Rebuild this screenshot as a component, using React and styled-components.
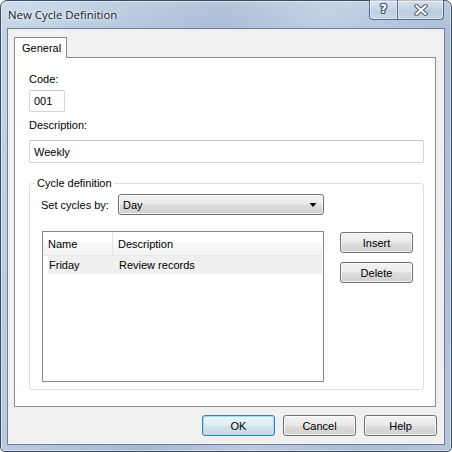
import React from 'react'
import styled, { createGlobalStyle, css } from 'styled-components'

const GlobalStyle = createGlobalStyle`
  html, body {
    margin: 0;
    padding: 0;
    background: #ffffff;
  }
  body {
    font-family: "Liberation Sans", Arial, sans-serif;
    font-size: 11px;
    color: #000000;
  }
  * {
    box-sizing: border-box;
  }
`

const Window = styled.div`
  width: 452px;
  height: 452px;
  display: flex;
  flex-direction: column;
  border: 1px solid #3f4d60;
  border-radius: 7px 7px 5px 5px;
  padding: 0 6px 6px 6px;
  background:
    linear-gradient(180deg, rgba(255,255,255,0.18), rgba(255,255,255,0) 40px),
    linear-gradient(100deg, #c4d4e8 0%, #b3c6de 22%, #a5b9d3 42%, #b9cbe1 62%, #a9bdd7 82%, #b2c5dd 100%);
  box-shadow: inset 0 0 0 1px rgba(255,255,255,0.45);
`

const TitleBar = styled.div`
  height: 27px;
  display: flex;
  align-items: flex-start;
  justify-content: space-between;
`

const Title = styled.div`
  font-family: "Open Sans", "Liberation Sans", sans-serif;
  font-size: 11.4px;
  line-height: 14px;
  padding: 7px 0 0 1px;
  color: #141a22;
  text-shadow: 0 0 6px rgba(255,255,255,0.9), 0 0 3px rgba(255,255,255,0.9);
`

const CaptionGroup = styled.div`
  display: flex;
  margin-top: -1px;
  margin-right: 1px;
`

const CaptionButton = styled.div`
  width: ${p => p.$w}px;
  height: 20px;
  display: flex;
  align-items: center;
  justify-content: center;
  border: 1px solid rgba(52, 70, 96, 0.75);
  border-top: none;
  background: linear-gradient(180deg, rgba(255,255,255,0.45) 0%, rgba(255,255,255,0.2) 50%, rgba(255,255,255,0.05) 51%, rgba(255,255,255,0.25) 100%);
  box-shadow: inset 0 0 0 1px rgba(255,255,255,0.35);
  ${p => p.$first && css`
    border-radius: 0 0 0 4px;
    border-right: none;
  `}
  ${p => p.$last && css`
    border-radius: 0 0 4px 0;
  `}
`

const HelpGlyph = styled.span`
  font-family: "DejaVu Sans", sans-serif;
  font-weight: bold;
  font-size: 12px;
  line-height: 12px;
  color: #ffffff;
  margin-top: -1px;
  text-shadow:
    1px 0 0 #4c5a6c, -1px 0 0 #4c5a6c, 0 1px 0 #4c5a6c, 0 -1px 0 #4c5a6c,
    1px 1px 0 #4c5a6c, -1px -1px 0 #4c5a6c, 1px -1px 0 #4c5a6c, -1px 1px 0 #4c5a6c;
`

const Client = styled.div`
  flex: 1;
  display: flex;
  flex-direction: column;
  border: 1px solid #6e7f97;
  background: #f0f0f0;
  padding: 8px 8px 0 6px;
`

const TabStrip = styled.div`
  display: flex;
  height: 20px;
  position: relative;
  z-index: 1;
`

const Tab = styled.div`
  width: 53px;
  height: 21px;
  border: 1px solid #898c95;
  border-bottom: none;
  background: #ffffff;
  padding: 3px 0 0 7px;
  line-height: 14px;
`

const Page = styled.div`
  flex: 1;
  display: flex;
  flex-direction: column;
  border: 1px solid #898c95;
  background: #ffffff;
  padding: 14px 11px 0 14px;
`

const FieldLabel = styled.div`
  line-height: 14px;
  margin-top: ${p => p.$mt || 0}px;
`

const TextBox = styled.div`
  height: ${p => p.$h}px;
  width: ${p => (p.$w ? `${p.$w}px` : 'auto')};
  margin-top: ${p => p.$mt}px;
  border: 1px solid #d2d5da;
  border-top-color: #c3c6cc;
  border-radius: 2px;
  padding: 0 0 0 4px;
  display: flex;
  align-items: center;
  line-height: 14px;
`

const Group = styled.fieldset`
  margin: 13px 0 0 0;
  padding: 4px 10px 7px 12px;
  border: 1px solid #d5dfe5;
  border-radius: 3px;
  min-width: 0;
`

const Legend = styled.legend`
  padding: 0 2px;
  margin-left: -7px;
  line-height: 14px;
`

const Row = styled.div`
  display: flex;
  align-items: center;
`

const RowLabel = styled.div`
  width: 77px;
  margin-left: -1px;
  line-height: 14px;
`

const buttonFace = css`
  border: 1px solid #707070;
  border-radius: 3px;
  background: linear-gradient(180deg, #f2f2f2 0%, #ebebeb 48%, #dddddd 52%, #cfcfcf 100%);
  box-shadow: inset 0 0 0 1px rgba(255,255,255,0.75);
`

const Combo = styled.div`
  ${buttonFace}
  width: 206px;
  height: 21px;
  display: flex;
  align-items: center;
  justify-content: space-between;
  padding: 0 3px 0 4px;
  line-height: 14px;
`

const ListArea = styled.div`
  display: flex;
  gap: 16px;
  margin-top: 16px;
`

const List = styled.div`
  width: 282px;
  height: 151px;
  border: 1px solid #828790;
  background: #ffffff;
  display: flex;
  flex-direction: column;
`

const HeaderRow = styled.div`
  display: flex;
  height: 24px;
  margin-right: 1px;
  border-bottom: 1px solid #e5e5e5;
  background: linear-gradient(180deg, #ffffff 0%, #ffffff 45%, #f7f8fa 46%, #f1f2f4 100%);
`

const HeaderCell = styled.div`
  width: ${p => (p.$w ? `${p.$w}px` : 'auto')};
  flex: ${p => (p.$w ? 'none' : 1)};
  display: flex;
  align-items: center;
  padding-left: 5px;
  border-right: ${p => (p.$w ? '1px solid #e5e5e5' : 'none')};
`

const ItemRow = styled.div`
  display: flex;
  height: 18px;
  margin: 0 1px 0 5px;
  background: #efefef;
`

const ItemCell = styled.div`
  width: ${p => (p.$w ? `${p.$w}px` : 'auto')};
  flex: ${p => (p.$w ? 'none' : 1)};
  display: flex;
  align-items: center;
  padding-left: 1px;
`

const SideButtons = styled.div`
  display: flex;
  flex-direction: column;
  gap: 9px;
  padding-top: 1px;
`

const Button = styled.div`
  ${buttonFace}
  width: 73px;
  height: 21px;
  display: flex;
  align-items: center;
  justify-content: center;
  line-height: 14px;
  ${p => p.$default && css`
    border-color: #3c7fb1;
    box-shadow: inset 0 0 0 1px #9edcf7;
    background: linear-gradient(180deg, #eaf4fa 0%, #e3eef5 48%, #d4e3ec 52%, #c9d9e4 100%);
  `}
`

const Footer = styled.div`
  display: flex;
  justify-content: flex-end;
  gap: 8px;
  padding: 8px 0 8px 0;
  margin-right: -1px;
`

export default function App() {
  return (
    <>
      <GlobalStyle />
      <Window>
        <TitleBar>
          <Title>New Cycle Definition</Title>
          <CaptionGroup>
            <CaptionButton $w={28} $first>
              <HelpGlyph>?</HelpGlyph>
            </CaptionButton>
            <CaptionButton $w={47} $last>
              <svg width="14" height="12" viewBox="0 0 14 12">
                <path d="M2.5 2 L11.5 10 M11.5 2 L2.5 10" stroke="#4c5a6c" strokeWidth="4.2" strokeLinecap="square" fill="none" />
                <path d="M2.5 2 L11.5 10 M11.5 2 L2.5 10" stroke="#ffffff" strokeWidth="2.2" strokeLinecap="square" fill="none" />
              </svg>
            </CaptionButton>
          </CaptionGroup>
        </TitleBar>
        <Client>
          <TabStrip>
            <Tab>General</Tab>
          </TabStrip>
          <Page>
            <FieldLabel>Code:</FieldLabel>
            <TextBox $w={36} $h={22} $mt={4}>001</TextBox>
            <FieldLabel $mt={6}>Description:</FieldLabel>
            <TextBox $h={23} $mt={8}>Weekly</TextBox>
            <Group>
              <Legend>Cycle definition</Legend>
              <Row>
                <RowLabel>Set cycles by:</RowLabel>
                <Combo>
                  <span>Day</span>
                  <svg width="13" height="8" viewBox="0 0 13 8">
                    <path d="M2.5 2 L9.5 2 L6 6 Z" fill="#000000" />
                  </svg>
                </Combo>
              </Row>
              <ListArea>
                <List>
                  <HeaderRow>
                    <HeaderCell $w={70}>Name</HeaderCell>
                    <HeaderCell>Description</HeaderCell>
                  </HeaderRow>
                  <ItemRow>
                    <ItemCell $w={70}>Friday</ItemCell>
                    <ItemCell>Review records</ItemCell>
                  </ItemRow>
                </List>
                <SideButtons>
                  <Button>Insert</Button>
                  <Button>Delete</Button>
                </SideButtons>
              </ListArea>
            </Group>
          </Page>
          <Footer>
            <Button $default>OK</Button>
            <Button>Cancel</Button>
            <Button>Help</Button>
          </Footer>
        </Client>
      </Window>
    </>
  )
}
